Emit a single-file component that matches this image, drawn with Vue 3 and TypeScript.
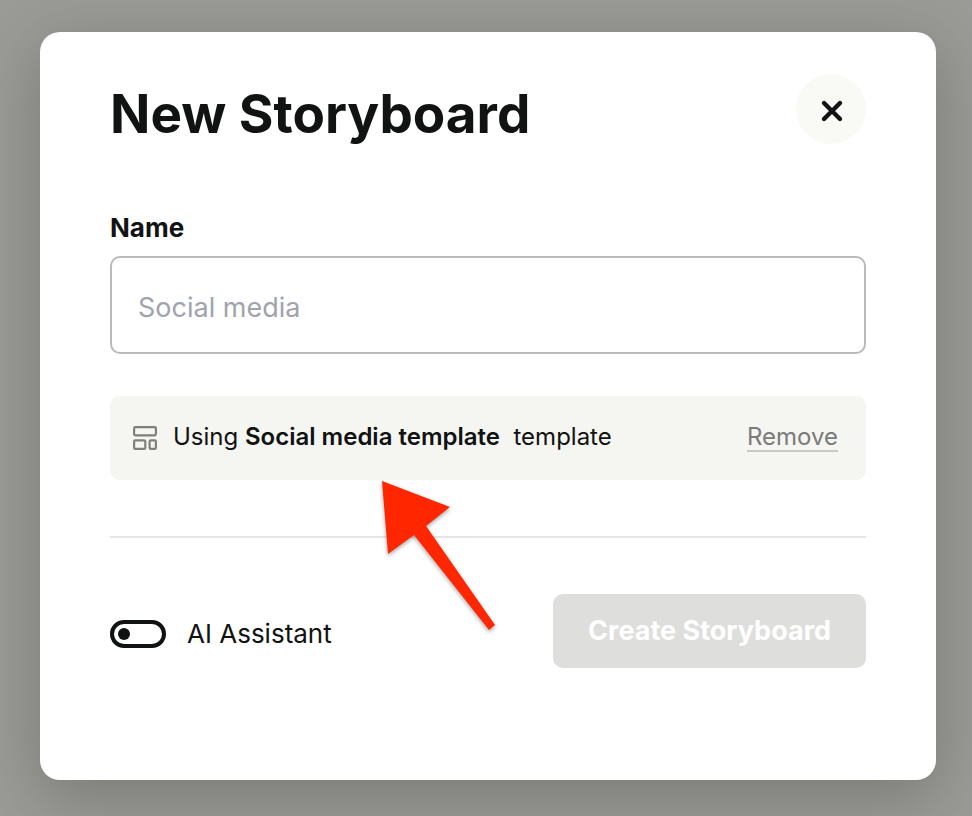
<script setup lang="ts">
import { ref } from 'vue'

const name = ref('')
const assistant = ref(false)
const template = ref<string | null>('Social media template')
</script>

<template>
  <div class="backdrop">
    <form class="dialog" role="dialog" aria-labelledby="dialog-title" @submit.prevent>
      <header class="header">
        <h1 id="dialog-title" class="title">New Storyboard</h1>
        <button class="close" type="button" aria-label="Close">
          <svg width="24" height="24" viewBox="0 0 24 24" aria-hidden="true">
            <path d="M4 4 20 20M20 4 4 20" fill="none" stroke="currentColor" stroke-width="4.4" stroke-linecap="round" />
          </svg>
        </button>
      </header>

      <label class="label" for="storyboard-name">Name</label>
      <input id="storyboard-name" v-model="name" class="field" type="text" placeholder="Social media" />

      <div v-if="template" class="notice">
        <svg class="notice-icon" width="24" height="24" viewBox="0 0 24 24" aria-hidden="true">
          <g fill="none" stroke="currentColor" stroke-width="2.2">
            <rect x="1.1" y="1.1" width="21.8" height="8.2" rx="1.2" />
            <rect x="1.1" y="14.3" width="11.2" height="8.6" rx="1.2" />
            <rect x="16.6" y="14.3" width="6.3" height="8.6" rx="1.2" />
          </g>
        </svg>
        <p class="notice-text">Using <strong>{{ template }}</strong>&nbsp; template</p>
        <a class="remove" href="#" @click.prevent="template = null">Remove</a>
        <svg class="pointer" width="130" height="170" viewBox="0 0 130 170" aria-hidden="true">
          <path d="M10 10 78 36 54 55 123 154 117 159 42 64 16 83Z" fill="#ff2600" />
        </svg>
      </div>

      <footer class="footer">
        <label class="assistant">
          <input v-model="assistant" class="switch" type="checkbox" />
          <span>AI Assistant</span>
        </label>
        <button class="create" type="submit" :disabled="!name">Create Storyboard</button>
      </footer>
    </form>
  </div>
</template>

<style>
body {
  background: #9a9b96;
}
</style>

<style scoped>
.backdrop {
  box-sizing: border-box;
  min-height: 100vh;
  padding: 32px 36px 36px 40px;
  overflow: hidden;
  font-family: Inter, "Liberation Sans", sans-serif;
  color: #111212;
}

.dialog {
  padding: 42px 70px 112px;
  border-radius: 20px;
  background: #fff;
  box-shadow: 0 16px 64px rgba(0, 0, 0, 0.22);
}

.header {
  display: flex;
  align-items: center;
  justify-content: space-between;
  margin-bottom: 68px;
}

.title {
  margin: 0;
  padding-top: 10px;
  font-size: 53px;
  font-weight: 700;
  line-height: 60px;
}

.close {
  display: flex;
  align-items: center;
  justify-content: center;
  width: 70px;
  height: 70px;
  padding: 4px 0 0 2px;
  border: 0;
  border-radius: 50%;
  background: #f9faf6;
  color: inherit;
}

.label {
  display: block;
  margin-bottom: 12px;
  font-size: 26px;
  font-weight: 700;
  line-height: 32px;
}

.field {
  display: block;
  box-sizing: border-box;
  width: 100%;
  height: 98px;
  padding: 4px 26px 0;
  border: 2px solid #bbb9b9;
  border-radius: 10px;
  background: #fff;
  color: inherit;
  font: inherit;
  font-size: 27px;
}

.field::placeholder {
  color: #9fa3ad;
  opacity: 1;
}

.notice {
  position: relative;
  display: flex;
  align-items: center;
  margin-top: 42px;
  padding: 23px 28px 23px 23px;
  border-radius: 10px;
  background: #f5f5f1;
  font-size: 24px;
  line-height: 36px;
}

.notice-icon {
  flex: none;
  margin-right: 16px;
  color: #7f7f7d;
}

.notice-text {
  flex: 1;
  margin: 0;
  padding-bottom: 2px;
}

.notice-text strong {
  font-weight: 600;
}

.remove {
  border-bottom: 2px solid #c9c9c6;
  color: #7b7b79;
  line-height: 26px;
  text-decoration: none;
}

.pointer {
  position: absolute;
  top: 75px;
  left: 262px;
  filter: drop-shadow(0 2px 2px rgba(0, 0, 0, 0.35));
  pointer-events: none;
}

.footer {
  display: flex;
  align-items: center;
  justify-content: space-between;
  margin-top: 56px;
  padding-top: 56px;
  border-top: 2px solid #e6e6e6;
}

.assistant {
  display: flex;
  align-items: center;
  gap: 21px;
  padding-top: 6px;
  font-size: 26px;
  line-height: 32px;
}

.switch {
  display: flex;
  align-items: center;
  box-sizing: border-box;
  width: 56px;
  height: 28px;
  margin: 0;
  padding: 0 4px;
  border: 4px solid #111212;
  border-radius: 14px;
  appearance: none;
}

.switch::before {
  width: 12px;
  height: 12px;
  border-radius: 50%;
  background: #111212;
  content: "";
}

.switch:checked {
  justify-content: flex-end;
}

.create {
  padding: 20px 35px;
  border: 0;
  border-radius: 10px;
  background: #111212;
  color: #fff;
  font: inherit;
  font-size: 27px;
  font-weight: 700;
  line-height: 34px;
}

.create:disabled {
  background: #dededc;
}
</style>
